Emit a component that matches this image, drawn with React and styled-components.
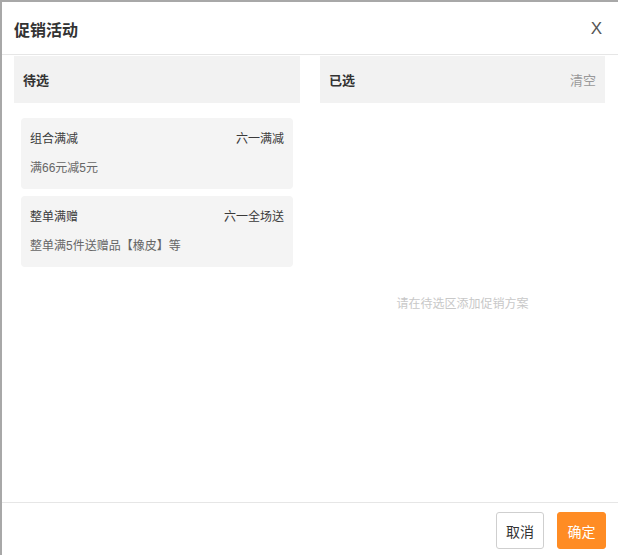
import styled, { createGlobalStyle } from "styled-components";

const GlobalStyle = createGlobalStyle`
  html, body {
    margin: 0;
    background: #a8a8a8;
    font-family: "Liberation Sans", "Noto Sans CJK SC", sans-serif;
  }
  #root {
    padding: 2px 0 0 2px;
  }
`;

const Dialog = styled.div`
  width: 616px;
  height: 553px;
  background: #fff;
  display: flex;
  flex-direction: column;
`;

const Header = styled.header`
  height: 53px;
  flex: none;
  box-sizing: border-box;
  border-bottom: 1px solid #e6e6e6;
  display: flex;
  align-items: center;
  justify-content: space-between;
  padding: 2px 16px 0 12px;
`;

const Title = styled.h1`
  margin: 0;
  font-size: 16px;
  font-weight: bold;
  color: #333;
`;

const Close = styled.button`
  border: none;
  background: transparent;
  padding: 0;
  font-family: "Liberation Sans", sans-serif;
  font-size: 17px;
  color: #555;
  cursor: pointer;
`;

const Body = styled.div`
  flex: 1;
  display: grid;
  grid-template-columns: 286px 285px;
  column-gap: 20px;
  padding: 1px 13px 0 12px;
`;

const Panel = styled.section`
  display: flex;
  flex-direction: column;
`;

const PanelHead = styled.div`
  height: 47px;
  padding: 0 9px;
  background: #f2f2f2;
  display: flex;
  align-items: center;
  justify-content: space-between;
  font-size: 13px;
`;

const PanelTitle = styled.span`
  font-weight: bold;
  color: #333;
`;

const ClearLink = styled.span`
  color: #999;
  cursor: pointer;
`;

const CardList = styled.div`
  display: flex;
  flex-direction: column;
  gap: 7px;
  padding: 15px 7px;
`;

const Card = styled.div`
  height: 71px;
  box-sizing: border-box;
  padding: 12px 9px 0;
  background: #f4f4f4;
  border-radius: 4px;
  font-size: 12px;
  line-height: 18px;
`;

const CardRow = styled.div`
  display: flex;
  justify-content: space-between;
  color: #3a3a3a;
`;

const CardDesc = styled.div`
  margin-top: 11px;
  color: #666;
`;

const Empty = styled.div`
  flex: 1;
  display: flex;
  align-items: center;
  justify-content: center;
  font-size: 12px;
  color: #c8c8c8;
  padding-bottom: 1px;
`;

const Footer = styled.footer`
  height: 53px;
  flex: none;
  box-sizing: border-box;
  border-top: 1px solid #e6e6e6;
  display: flex;
  justify-content: flex-end;
  align-items: flex-start;
  gap: 13px;
  padding: 9px 12px 0 0;
`;

const Button = styled.button`
  width: ${({ $primary }) => ($primary ? "49px" : "48px")};
  height: 37px;
  border-radius: 3px;
  border: 1px solid ${({ $primary }) => ($primary ? "#ff8c24" : "#cfcfcf")};
  background: ${({ $primary }) => ($primary ? "#ff8c24" : "#fff")};
  color: ${({ $primary }) => ($primary ? "#fff" : "#333")};
  font-family: inherit;
  font-size: 14px;
  padding: 0;
  cursor: pointer;
`;

const promos = [
  { name: "组合满减", tag: "六一满减", desc: "满66元减5元" },
  { name: "整单满赠", tag: "六一全场送", desc: "整单满5件送赠品【橡皮】等" },
];

export default function App() {
  return (
    <>
      <GlobalStyle />
      <Dialog>
        <Header>
          <Title>促销活动</Title>
          <Close aria-label="关闭">X</Close>
        </Header>

        <Body>
          <Panel>
            <PanelHead>
              <PanelTitle>待选</PanelTitle>
            </PanelHead>
            <CardList>
              {promos.map((p) => (
                <Card key={p.name}>
                  <CardRow>
                    <span>{p.name}</span>
                    <span>{p.tag}</span>
                  </CardRow>
                  <CardDesc>{p.desc}</CardDesc>
                </Card>
              ))}
            </CardList>
          </Panel>

          <Panel>
            <PanelHead>
              <PanelTitle>已选</PanelTitle>
              <ClearLink>清空</ClearLink>
            </PanelHead>
            <Empty>请在待选区添加促销方案</Empty>
          </Panel>
        </Body>

        <Footer>
          <Button>取消</Button>
          <Button $primary>确定</Button>
        </Footer>
      </Dialog>
    </>
  );
}
